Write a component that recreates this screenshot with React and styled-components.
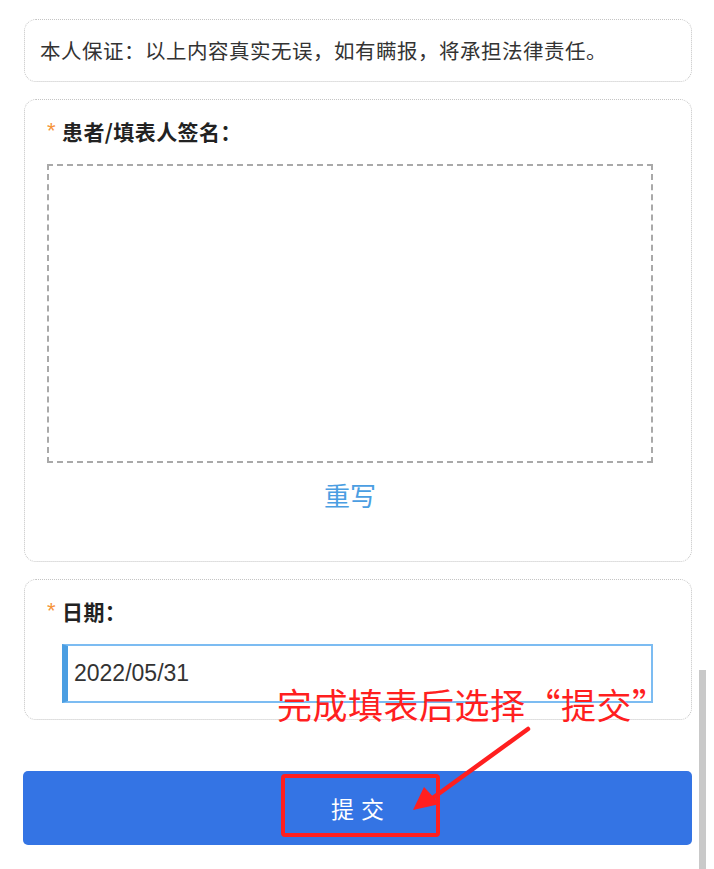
import React from 'react';
import styled, { createGlobalStyle } from 'styled-components';

const GlobalStyle = createGlobalStyle`
  html, body {
    margin: 0;
    padding: 0;
    background: #fff;
    overflow: hidden;
  }
  body {
    font-family: "Noto Sans CJK SC", "Noto Sans", sans-serif;
    color: #333;
  }
`;

const StyledPage = styled.div`
  position: relative;
  width: 714px;
  height: 869px;
  box-sizing: border-box;
  padding: 19px 22px 0 23px;
  display: flex;
  flex-direction: column;
`;
const StyledCard = styled.section`
  box-sizing: border-box;
  margin-left: 1px;
  border: 1px dotted #c4c4c4;
  border-radius: 12px;
  padding: ${({ padding }) => padding};
  margin-bottom: ${({ gap }) => gap}px;
  height: ${({ h }) => h}px;
`;
const StyledStatement = styled.p`
  margin: 0;
  font-size: 20.5px;
  line-height: 30px;
  color: #333;
  letter-spacing: 0.5px;
`;
const StyledLabel = styled.div`
  display: flex;
  align-items: center;
  gap: 5px;
  font-size: 21px;
  line-height: 30px;
  font-weight: 700;
  color: #222;
  letter-spacing: 0.4px;
`;
const StyledStar = styled.span`
  color: #f5953b;
  font-size: 22px;
  font-weight: 400;
  width: 10px;
  font-family: "Liberation Sans", sans-serif;
`;
const StyledSignPad = styled.div`
  box-sizing: border-box;
  margin-top: 18px;
  width: 606px;
  height: 299px;
  border: 2px dashed #a9a9a9;
`;
const StyledRewrite = styled.button`
  display: block;
  width: 606px;
  margin-top: 13px;
  padding: 0;
  border: 0;
  background: none;
  font-family: "Noto Sans CJK SC", sans-serif;
  font-size: 26px;
  line-height: 38px;
  color: #4b9ee2;
  text-align: center;
`;
const StyledDateInput = styled.div`
  box-sizing: border-box;
  margin: 18px 0 0 15px;
  width: 591px;
  height: 59px;
  border: 2px solid #7cbcf2;
  border-left: 6px solid #4b9ee2;
  display: flex;
  align-items: center;
  padding-left: 6px;
  font-family: "Liberation Sans", sans-serif;
  font-size: 23px;
  color: #333;
`;
const StyledSubmit = styled.button`
  margin-top: 51px;
  width: 669px;
  height: 74px;
  border: 0;
  border-radius: 5px;
  background: #3474e4;
  color: #fff;
  font-family: "Noto Sans CJK SC", sans-serif;
  font-size: 23px;
  letter-spacing: 7px;
  padding: 0 0 0 7px;
`;
const StyledNote = styled.div`
  position: absolute;
  left: 277px;
  top: 681px;
  font-family: "Noto Sans CJK SC", sans-serif;
  font-size: 35px;
  line-height: 46px;
  color: #ff1f1f;
  white-space: nowrap;
  letter-spacing: 0.5px;
`;
const StyledHighlight = styled.div`
  position: absolute;
  left: 281px;
  top: 774px;
  width: 159px;
  height: 63px;
  box-sizing: border-box;
  border: 4px solid #ff1f1f;
  border-radius: 4px;
`;
const StyledArrow = styled.svg`
  position: absolute;
  left: 400px;
  top: 720px;
`;
const StyledScrollbar = styled.div`
  position: absolute;
  left: 699px;
  top: 670px;
  width: 7px;
  height: 199px;
  background: #c9c9c9;
`;

const App = () => (
  <>
    <GlobalStyle />
    <StyledPage>
      <StyledCard padding="15px 15px" gap={17} h={63}>
        <StyledStatement>本人保证：以上内容真实无误，如有瞒报，将承担法律责任。</StyledStatement>
      </StyledCard>
      <StyledCard padding="16px 22px" gap={17} h={463}>
        <StyledLabel>
          <StyledStar>*</StyledStar>
          患者/填表人签名：
        </StyledLabel>
        <StyledSignPad />
        <StyledRewrite type="button">重写</StyledRewrite>
      </StyledCard>
      <StyledCard padding="16px 22px" gap={0} h={141}>
        <StyledLabel>
          <StyledStar>*</StyledStar>
          日期：
        </StyledLabel>
        <StyledDateInput>2022/05/31</StyledDateInput>
      </StyledCard>
      <StyledSubmit type="button">提交</StyledSubmit>

      <StyledNote>完成填表后选择“提交”</StyledNote>
      <StyledHighlight />
      <StyledArrow width="140" height="100" viewBox="0 0 140 100">
        <line x1="128" y1="9" x2="30" y2="80" stroke="#ff1f1f" strokeWidth="4.5" strokeLinecap="round" />
        <polygon points="13,90 24,67 40,84" fill="#ff1f1f" />
      </StyledArrow>
      <StyledScrollbar />
    </StyledPage>
  </>
);

export default App;
